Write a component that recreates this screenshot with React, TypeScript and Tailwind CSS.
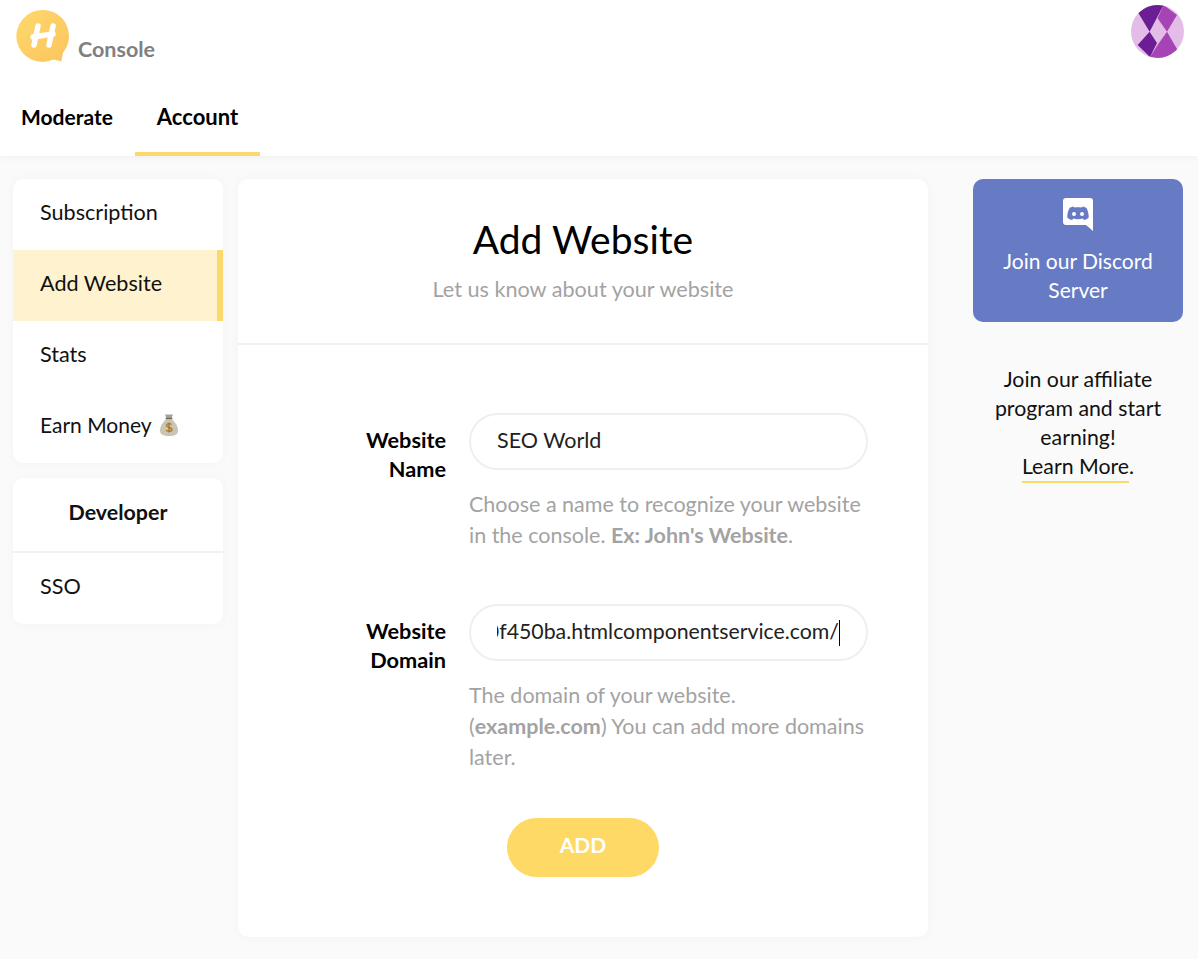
const font = { fontFamily: '"Lato","Noto Sans",sans-serif' };

function Logo() {
  return (
    <svg width="54" height="54" viewBox="0 0 54 54" className="block">
      <defs>
        <linearGradient id="lg" x1="0" y1="0" x2="1" y2="1">
          <stop offset="0" stopColor="#ffd96b" />
          <stop offset="1" stopColor="#fbc45e" />
        </linearGradient>
      </defs>
      <path d="M27 1A26 26 0 0 1 47 43.600L45.500 51.500c-.2 1-.8 1.100-1.500.6L37.500 50.500A26 26 0 1 1 27 1z" fill="url(#lg)" />
      <g stroke="#fff" strokeWidth="5.500" strokeLinecap="round" fill="none">
        <path d="M22 17 18 36" />
        <path d="M37 17 33 36" />
        <path d="M17 28 37 25" />
      </g>
    </svg>
  );
}

function Avatar() {
  return (
    <svg width="54" height="54" viewBox="0 0 54 54" className="block">
      <defs>
        <clipPath id="c"><circle cx="26.500" cy="26.500" r="26.500" /></clipPath>
      </defs>
      <g clipPath="url(#c)">
        <rect width="54" height="54" fill="#e3bde8" />
        <path d="M6.600 6.700 10 0H32.600L18.600 26.700z" fill="#6d1d94" />
        <path d="M32.600 0 46 10 36 26.700 26.600 13.300z" fill="#a744b5" />
        <path d="M18.600 26.700 26 38 19 52 6.600 40z" fill="#6d1d94" />
        <path d="M36 26.700 46.600 45 32.600 54 19 52 26.600 40z" fill="#a744b5" />
      </g>
    </svg>
  );
}

function DiscordIcon() {
  return (
    <svg width="30" height="33" viewBox="0 0 30 33" className="block">
      <path d="M3 0H27a3 3 0 0 1 3 3V33l-7-6H3a3 3 0 0 1-3-3V3a3 3 0 0 1 3-3z" fill="#fff" />
      <path d="M10.500 8.500c-1.800.3-3 .9-4 1.600C5 13 4.200 16 4.300 19.800c1.400 1.300 3.300 2 4.900 2.200l1-1.500c3 .9 6.600.9 9.600 0l1 1.500c1.600-.2 3.500-.9 4.900-2.200.1-3.800-.7-6.800-2.200-9.700-1-.7-2.200-1.300-4-1.600l-.5 1c-2.900-.4-6.100-.4-8 0z" fill="#677bc4" />
      <circle cx="11" cy="16" r="2" fill="#fff" />
      <circle cx="19" cy="16" r="2" fill="#fff" />
    </svg>
  );
}

function MoneyBag() {
  return (
    <svg width="20" height="24" viewBox="0 0 20 24" className="inline-block">
      <path d="M6 1.500h8l-1.500 4h-5z" fill="#a9a594" />
      <rect x="6.500" y="4.800" width="7" height="1.800" rx=".9" fill="#6f6a58" />
      <path d="M7 6.500h6c3 2.500 6 6.500 6 11 0 4-3 5.500-9 5.500s-9-1.500-9-5.500c0-4.500 3-8.500 6-11z" fill="#c9c5b4" />
      <path d="M12.500 11.500c-1-1.200-5-1.200-5 1 0 2.500 5.500 1.500 5.500 4 0 2.200-4.500 2.200-6 .8M10 9.500v10" stroke="#a8791f" strokeWidth="1.300" fill="none" />
    </svg>
  );
}

function Field({ label, second, value, right, children }: { label: string; second: string; value: string; right?: boolean; children: React.ReactNode }) {
  return (
    <div className="flex">
      <div className="w-[208px] shrink-0 pt-[13px] text-right text-[21.7px] leading-[29px] font-bold text-black">
        {label}
        <br />
        {second}
      </div>
      <div className="ml-[23px] w-[399px]">
        <div className={`h-[57px] rounded-full border-2 border-[#efefef] bg-white px-[26px] text-[#222] ${right ? "text-[21.300px]" : "text-[21.500px]"}`}>
          <div className={`flex h-full items-center overflow-hidden pb-[2px] ${right ? "justify-end" : ""}`}>
            <span className="whitespace-nowrap">{value}</span>
            {right && <span className="mt-[2px] h-[26px] w-px shrink-0 bg-black" />}
          </div>
        </div>
        <p className="mt-[19px] text-[21.500px] leading-[31px] text-[#a3a3a3]">{children}</p>
      </div>
    </div>
  );
}

const rowCls = "flex h-[71px] items-center pl-[27px] pb-[5px]";

export default function App() {
  return (
    <div style={font} className="min-h-[959px] bg-[#fafafa] text-[#111]">
      <header className="h-[156px] bg-white shadow-[0_1px_8px_rgba(0,0,0,0.05)]">
        <div className="flex h-[87px] items-start justify-between pr-[13px]">
          <div className="flex items-start pl-[16px] pt-[9px]">
            <Logo />
            <span className="ml-[8px] mt-[24px] text-[21.500px] font-bold text-[#808080]">Console</span>
          </div>
          <div className="pt-[5px]"><Avatar /></div>
        </div>
        <nav className="flex h-[69px]">
          <a className="flex h-[69px] w-[135px] items-start pl-[21px] pt-[14px] text-[21px] font-bold text-black">Moderate</a>
          <a className="flex h-[69px] w-[125px] items-start justify-center border-b-4 border-[#fbd96e] pt-[13px] text-[22px] font-bold text-black">Account</a>
        </nav>
      </header>

      <div className="flex items-start pt-[23px] pl-[13px]">
        <aside className="w-[210px] shrink-0">
          <div className="overflow-hidden rounded-[10px] bg-white text-[21.600px] shadow-[0_0_12px_rgba(0,0,0,0.03)]">
            <div className={rowCls}>Subscription</div>
            <div className="flex h-[71px] items-center border-r-[6px] border-[#fbd96e] bg-[#fff3cf] pb-[5px] pl-[27px]">Add Website</div>
            <div className={rowCls}>Stats</div>
            <div className="flex h-[71px] items-center gap-[7px] pl-[27px] pb-[5px] text-[21px]">Earn Money <MoneyBag /></div>
          </div>
          <div className="mt-[15px] overflow-hidden rounded-[10px] bg-white text-[21.600px] shadow-[0_0_12px_rgba(0,0,0,0.03)]">
            <div className="flex h-[75px] items-center justify-center border-b-2 border-[#f1f1f1] pb-[5px] text-[21.400px] font-bold">Developer</div>
            <div className={rowCls}>SSO</div>
          </div>
        </aside>

        <main className="ml-[15px] h-[758px] w-[690px] shrink-0 rounded-[10px] bg-white shadow-[0_0_12px_rgba(0,0,0,0.03)]">
          <div className="h-[166px] border-b-2 border-[#f1f1f1] pt-[35px] text-center">
            <h1 className="text-[39px] leading-[50px] font-normal text-black">Add Website</h1>
            <p className="mt-[10px] text-[21.650px] leading-[30px] text-[#a3a3a3]">Let us know about your website</p>
          </div>
          <div className="pt-[68px]">
            <Field label="Website" second="Name" value="SEO World">
              Choose a name to recognize your website in the console. <b>Ex: John's Website</b>.
            </Field>
            <div className="mt-[53px]">
              <Field label="Website" second="Domain" value="https://abc0f450ba.htmlcomponentservice.com/" right>
                The domain of your website. (<b>example.com</b>) You can add more domains later.
              </Field>
            </div>
            <div className="mt-[45px] flex justify-center">
              <button className="h-[59px] w-[152px] rounded-full bg-[#fed966] pb-[5px] text-[21px] font-bold text-white">ADD</button>
            </div>
          </div>
        </main>

        <aside className="ml-[45px] w-[210px] shrink-0">
          <div className="flex h-[143px] flex-col items-center rounded-[10px] bg-[#677bc4] pt-[19px] text-center text-[21px] leading-[29px] text-white">
            <DiscordIcon />
            <div className="mt-[15px]">Join our Discord<br />Server</div>
          </div>
          <div className="mt-[43px] text-center text-[21.300px] leading-[29px] text-[#111]">
            Join our affiliate<br />program and start<br />earning!<br />
            <span><a className="inline-block border-b-2 border-[#fbd96e]">Learn More</a>.</span>
          </div>
        </aside>
      </div>
    </div>
  );
}
